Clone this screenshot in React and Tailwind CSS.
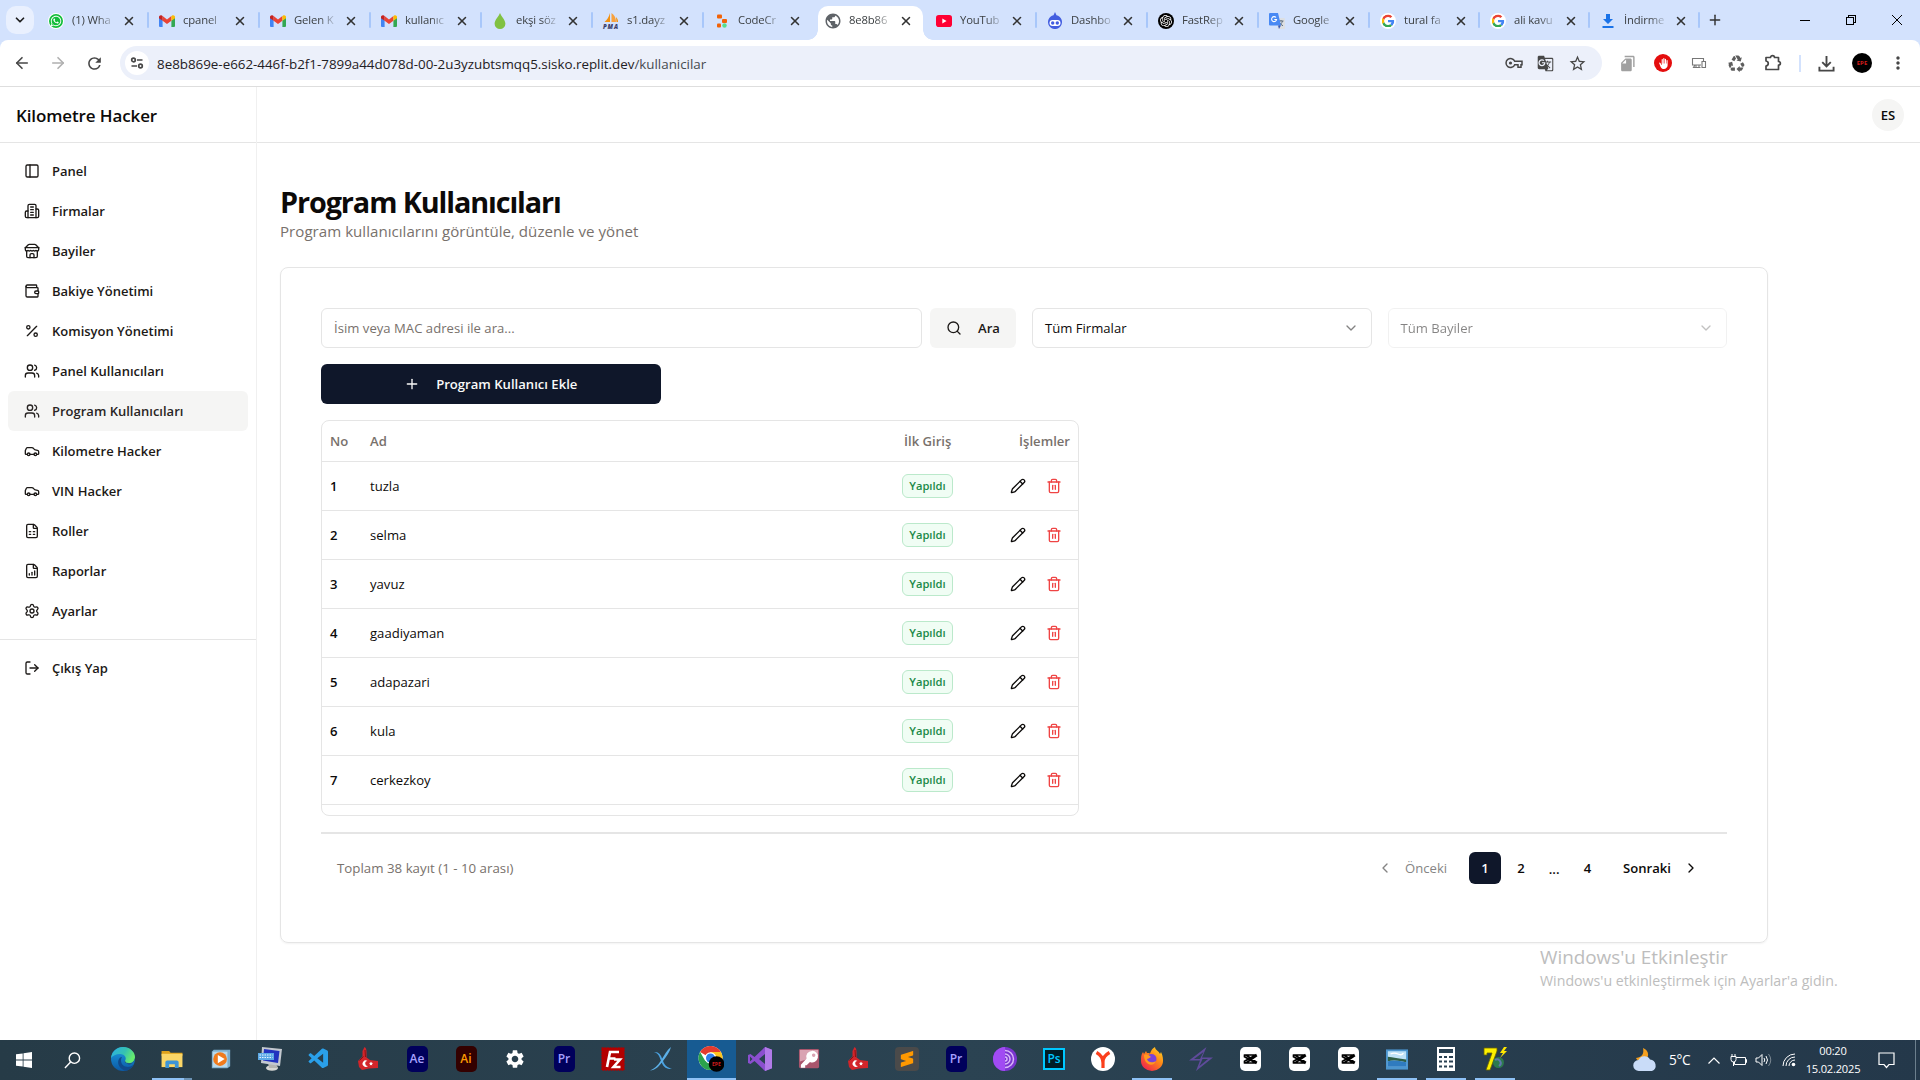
import React from 'react';
import {
  PanelLeft, Wallet, Percent, Users, Car, FileSpreadsheet, FileChartColumnIncreasing, Settings, LogOut,
  Search, Plus, ChevronDown, ChevronLeft, ChevronRight, Pencil, Trash2, X, ArrowLeft, ArrowRight,
} from 'lucide-react';
import { FaWhatsapp } from 'react-icons/fa';
import { SiOpenai, SiSublimetext } from 'react-icons/si';
import {
  MdStarOutline, MdRecycling, MdPublic, MdMoreVert, MdGTranslate, MdRefresh, MdFileCopy, MdBackHand, MdSettings,
} from 'react-icons/md';
import { VscVscode } from 'react-icons/vsc';

/* ---------- favicons ---------- */

const Gmail = () => (
  <svg viewBox="0 0 16 12" className="h-3.5 w-4">
    <path d="M0 2.2V11a1 1 0 0 0 1 1h2.6V5.4L0 2.2Z" fill="#4285f4" />
    <path d="M16 2.2V11a1 1 0 0 1-1 1h-2.6V5.4L16 2.2Z" fill="#34a853" />
    <path d="M3.6 1.1v4.6L8 9l4.4-3.3V1.1L8 4.4 3.6 1.1Z" fill="#ea4335" />
    <path d="M0 2v1.2l3.6 2.6V1.1L3.1.7C1.8-.3 0 .5 0 2Z" fill="#c5221f" />
    <path d="M16 2v1.2l-3.6 2.6V1.1l.5-.4C14.2-.3 16 .5 16 2Z" fill="#fbbc04" />
  </svg>
);

const WhatsApp = () => (
  <span className="grid size-4 place-items-center rounded-full bg-white">
    <span className="grid size-3.5 place-items-center rounded-full bg-[#12bd3a]">
      <FaWhatsapp className="size-3 text-white" />
    </span>
  </span>
);

const Drop = () => (
  <svg viewBox="0 0 16 20" className="h-[18px] w-4">
    <path d="M8 1C9.5 5 14 8.5 14 13a6 6 0 0 1-12 0C2 8.5 6.5 5 8 1Z" fill="#80c142" />
  </svg>
);

const Pma = () => (
  <svg viewBox="0 0 16 16" className="size-4 overflow-visible">
    <path d="M7 0v9H1.5C4 7 6 4 7 0Z" fill="#f29111" />
    <path d="M8.5 0c3 2 4.500 5 4.500 9H8.500Z" fill="#f8a13d" />
    <path d="M13 4c1.500 1.500 2 3 2 5h-1.500Z" fill="#f29111" />
    <text x="0" y="15.500" fontSize="6" fontWeight="800" fontStyle="italic" fill="#3b3f6b" fontFamily="Open Sans, sans-serif" textLength="15">PMA</text>
  </svg>
);

const Replit = () => (
  <svg viewBox="0 0 16 16" className="size-4">
    <rect x="3" y="1.500" width="5" height="4" rx="1" fill="#f26207" />
    <rect x="8" y="6" width="5" height="4" rx="1" fill="#f26207" />
    <rect x="3" y="10.500" width="4" height="4" rx="1" fill="#f26207" />
    <circle cx="10.500" cy="12.500" r="2.200" fill="#57e08b" />
  </svg>
);

const YouTube = () => (
  <svg viewBox="0 0 16 12" className="h-3 w-4">
    <rect width="16" height="12" rx="2.800" fill="#ff0033" />
    <path d="M6.300 3.500v5L10.600 6Z" fill="#fff" />
  </svg>
);

const Coolify = () => (
  <svg viewBox="0 0 16 17" className="h-[17px] w-4">
    <path d="M8 0l1.500 3.200A7 7 0 1 1 6.500 3.200Z" fill="#435ee0" />
    <rect x="2.500" y="8" width="11" height="6" rx="3" fill="#fff" />
    <circle cx="5.700" cy="11" r="1.700" fill="#435ee0" />
    <circle cx="10.300" cy="11" r="1.700" fill="#435ee0" />
  </svg>
);

const ChatGpt = () => (
  <span className="grid size-4 place-items-center rounded-full bg-black">
    <SiOpenai className="size-3 text-white" />
  </span>
);

const GoogleG = () => (
  <svg viewBox="0 0 48 48" className="size-4 rounded-full bg-white p-[1.5px]">
    <path fill="#ea4335" d="M24 9.500c3.500 0 6.700 1.200 9.200 3.600l6.900-6.900C35.900 2.400 30.500 0 24 0 14.600 0 6.500 5.400 2.600 13.200l8 6.200C12.400 13.700 17.700 9.500 24 9.500z" />
    <path fill="#4285f4" d="M47 24.600c0-1.600-.2-3.100-.4-4.600H24v9h12.900c-.6 3-2.200 5.500-4.700 7.200l7.700 6C44.400 38 47 31.800 47 24.600z" />
    <path fill="#fbbc05" d="M10.500 28.600a14.500 14.500 0 0 1 0-9.200l-8-6.200a24 24 0 0 0 0 21.600z" />
    <path fill="#34a853" d="M24 48c6.500 0 11.900-2.100 15.900-5.800l-7.700-6c-2.200 1.500-4.900 2.300-8.200 2.300-6.300 0-11.600-4.200-13.500-9.900l-8 6.200C6.500 42.600 14.600 48 24 48z" />
  </svg>
);

const Translate = () => (
  <svg viewBox="0 0 16 16" className="size-4">
    <path d="M6 5h9a1 1 0 0 1 1 1v9a1 1 0 0 1-1 1H9Z" fill="#dcdfe3" />
    <path d="M9.500 8h5M12 7v1m1.500 0c-.5 2-2 3.500-3.500 4.500M10.500 9.500c.7 1.300 2 2.600 3.500 3.300" stroke="#5f6f7f" fill="none" strokeWidth="1" />
    <path d="M1 0h8l3 12.500H1a1 1 0 0 1-1-1V1a1 1 0 0 1 1-1Z" fill="#4889f4" />
    <path d="M9 12.500h3L10 16Z" fill="#3a5bbc" />
    <path d="M7 4.500A2.500 2.500 0 1 0 7.600 6.500H5.300" stroke="#fff" fill="none" strokeWidth="1.100" />
  </svg>
);

const Download = ({ className }) => (
  <svg viewBox="0 0 16 16" className={className}>
    <path d="M6 1h4v5h3l-5 5-5-5h3ZM2.500 13h11v2h-11Z" fill="#1a73e8" />
  </svg>
);

const tabs = [
  [<WhatsApp />, '(1) Wha'], [<Gmail />, 'cpanel'], [<Gmail />, 'Gelen K'], [<Gmail />, 'kullanıc'],
  [<Drop />, 'ekşi söz'], [<Pma />, 's1.dayz'], [<Replit />, 'CodeCr'],
  [<MdPublic className="size-[18px] text-[#5f6368]" />, '8e8b86'], [<YouTube />, 'YouTub'], [<Coolify />, 'Dashbo'],
  [<ChatGpt />, 'FastRep'], [<Translate />, 'Google'], [<GoogleG />, 'tural fa'], [<GoogleG />, 'ali kavu'],
  [<Download className="size-4" />, 'İndirme'],
];

function TabBar() {
  return (
    <div className="flex h-10 items-center bg-[#d3e2fd]">
      <div className="grid h-7 w-[38px] shrink-0 place-items-center pl-1">
        <div className="mr-1 ml-0.5 grid size-7 place-items-center rounded-[10px] bg-[#e9f0fe]">
          <ChevronDown className="size-3.5 text-[#1f1f1f]" strokeWidth={3} />
        </div>
      </div>
      {tabs.map(([icon, title], i) => {
        const active = i === 7;
        return (
          <div key={i} className={i < 12 ? 'flex h-full w-[111px] shrink-0 items-end' : 'flex h-full w-[110px] shrink-0 items-end'}>
            <div className={active
              ? 'relative ml-[3px] flex h-[34px] w-[105px] items-center rounded-t-[10px] bg-white pb-[5px] pl-1.5 before:absolute before:bottom-0 before:-left-2.5 before:size-2.5 before:bg-[radial-gradient(circle_at_0_0,#d3e2fd_9.5px,#fff_10px)] after:absolute after:-right-2.5 after:bottom-0 after:size-2.5 after:bg-[radial-gradient(circle_at_100%_0,#d3e2fd_9.5px,#fff_10px)]'
              : 'ml-[3px] flex h-[34px] w-[105px] items-center pb-[5px] pl-1.5'}>
              <span className="grid size-[18px] shrink-0 place-items-center">{icon}</span>
              <span className="ml-[7px] w-[42px] text-[11.3px] tracking-[-0.15px] whitespace-nowrap text-[#3c4043] [mask-image:linear-gradient(90deg,#000_60%,transparent_105%)]">{title}</span>
              <X className="ml-2 size-3.5 shrink-0 text-[#333]" strokeWidth={2.6} />
            </div>
            {i !== 7 && i !== 6 && <div className="mb-3 ml-px h-4 w-0.5 rounded bg-[#a8c7fa]" />}
          </div>
        );
      })}
      <Plus className="ml-[7px] size-4 text-[#333]" strokeWidth={2.2} />
      <div className="ml-auto flex h-full items-center text-black">
        <div className="grid w-[46px] place-items-center"><div className="h-px w-2.5 bg-black" /></div>
        <div className="grid w-[46px] place-items-center">
          <svg viewBox="0 0 10 10" className="size-2.5" fill="none" stroke="currentColor" shapeRendering="crispEdges"><path d="M.5 2.500h7v7h-7zM2.500 2.500v-2h7v7h-2" /></svg>
        </div>
        <div className="grid w-[46px] place-items-center">
          <svg viewBox="0 0 10 10" className="size-2.5" fill="none" stroke="currentColor"><path d="M0 0l10 10M10 0L0 10" /></svg>
        </div>
      </div>
    </div>
  );
}

function Toolbar() {
  return (
    <div className="bg-[#d3e2fd]">
      <div className="flex h-[47px] items-center rounded-t-lg border-b border-[#dedede] bg-white text-[#474747]">
        <div className="flex w-[120px] items-center gap-[18px] pl-[13px]">
          <ArrowLeft className="size-[18px]" strokeWidth={2.2} />
          <ArrowRight className="size-[18px] text-[#b0b0b0]" strokeWidth={2.2} />
          <MdRefresh className="size-[19px]" />
        </div>
        <div className="flex h-[34px] w-[1482px] items-center rounded-full bg-[#ecf0fa] pl-[5px]">
          <div className="grid size-6 place-items-center rounded-full bg-white">
            <svg viewBox="0 0 14 12" className="h-3 w-3.5" fill="none" stroke="currentColor" strokeWidth="1.700">
              <circle cx="3.500" cy="3" r="1.800" /><path d="M7 3h5.500M1.500 9H7" /><circle cx="10.500" cy="9" r="1.800" />
            </svg>
          </div>
          <div className="ml-2 pt-0.5 text-[13.4px] tracking-[-0.02px] whitespace-nowrap text-[#1f2024]">8e8b869e-e662-446f-b2f1-7899a44d078d-00-2u3yzubtsmqq5.sisko.replit.dev<span className="text-[#474b50]">/kullanicilar</span></div>
          <div className="mr-[15px] ml-auto flex items-center gap-[14px]">
            <svg viewBox="0 0 18 12" className="h-3 w-[18px]" fill="none" stroke="currentColor" strokeWidth="1.500">
              <path d="M9.700 4.300H17v3.400h-1v2.500h-3V7.700H9.700a4.500 4.500 0 1 1 0-3.400Z" /><circle cx="5.500" cy="6" r="1.600" fill="currentColor" stroke="none" />
            </svg>
            <MdGTranslate className="size-[17px]" />
            <MdStarOutline className="size-[19px]" />
          </div>
        </div>
        <div className="ml-[17px] flex items-center gap-[18px]">
          <MdFileCopy className="size-[17px] -scale-x-100 text-[#a0a0a0]" />
          <span className="grid size-[18px] place-items-center rounded-full bg-[#e40d0d]"><MdBackHand className="size-[11px] text-white" /></span>
          <svg viewBox="0 0 16 12" className="mx-px h-3 w-4" fill="none" stroke="#777" strokeWidth="1.100">
            <path d="M10 8H1.500V1.500h11V4M4 8l-1.500 2.500h7M11 4.500h3.500v6H11zM5 8v2M8 8v2" />
          </svg>
          <MdRecycling className="ml-px size-[19px] text-[#5d5d5d]" />
          <svg viewBox="0 0 18 18" className="size-[18px]" fill="none" stroke="currentColor" strokeWidth="1.700" strokeLinejoin="round">
            <path d="M2 3.500h4.500C6.500 1 10.500 1 10.500 3.500H14.500v4C17 7.500 17 11 14.500 11v4.500H2V12c3-.5 3-4.500 0-5Z" />
          </svg>
          <div className="-ml-px h-[17px] w-0.5 bg-[#d3e2fd]" />
          <svg viewBox="0 0 18 18" className="-ml-px size-[17px]" fill="none" stroke="currentColor" strokeWidth="2"><path d="M9 1v11M4.500 7.500L9 12l4.500-4.500M1.500 12.500v4h15v-4" /></svg>
          <div className="-ml-px grid size-5 place-items-center rounded-full bg-black text-[6px] leading-none font-bold text-[#d01c1c]">EPE</div>
          <MdMoreVert className="-ml-0.5 size-5" />
        </div>
      </div>
    </div>
  );
}

/* ---------- application ---------- */

const StrokeIcon = ({ paths, className }) => (
  <svg viewBox="0 0 24 24" className={className} fill="none" stroke="currentColor" strokeWidth="2" strokeLinecap="round" strokeLinejoin="round">
    {paths.map((d) => <path key={d} d={d} />)}
  </svg>
);

const Building = (p) => (
  <StrokeIcon {...p} paths={[
    'M6 22V4a2 2 0 0 1 2-2h8a2 2 0 0 1 2 2v18Z', 'M6 12H4a2 2 0 0 0-2 2v6a2 2 0 0 0 2 2h2',
    'M18 9h2a2 2 0 0 1 2 2v9a2 2 0 0 1-2 2h-2', 'M10 6h4', 'M10 10h4', 'M10 14h4', 'M10 18h4',
  ]} />
);

const Shop = (p) => (
  <StrokeIcon {...p} paths={[
    'm2 7 4.410-4.410A2 2 0 0 1 7.830 2h8.340a2 2 0 0 1 1.420.590L22 7', 'M4 12v8a2 2 0 0 0 2 2h12a2 2 0 0 0 2-2v-8',
    'M15 22v-4a2 2 0 0 0-2-2h-2a2 2 0 0 0-2 2v4', 'M2 7h20',
    'M22 7v3a2 2 0 0 1-2 2a2.700 2.700 0 0 1-1.590-.63.7.7 0 0 0-.82 0A2.700 2.700 0 0 1 16 12a2.700 2.700 0 0 1-1.590-.63.7.7 0 0 0-.82 0A2.700 2.700 0 0 1 12 12a2.700 2.700 0 0 1-1.590-.63.7.7 0 0 0-.82 0A2.700 2.700 0 0 1 8 12a2.700 2.700 0 0 1-1.590-.63.7.7 0 0 0-.82 0A2.700 2.700 0 0 1 4 12a2 2 0 0 1-2-2V7',
  ]} />
);

const menu = [
  [PanelLeft, 'Panel'], [Building, 'Firmalar'], [Shop, 'Bayiler'], [Wallet, 'Bakiye Yönetimi'], [Percent, 'Komisyon Yönetimi'],
  [Users, 'Panel Kullanıcıları'], [Users, 'Program Kullanıcıları', true], [Car, 'Kilometre Hacker'], [Car, 'VIN Hacker'],
  [FileSpreadsheet, 'Roller'], [FileChartColumnIncreasing, 'Raporlar'], [Settings, 'Ayarlar'],
];

function MenuItem({ icon: Icon, label, active }) {
  return (
    <div className={active
      ? 'flex h-10 items-center gap-3 rounded-md bg-[#f5f5f4] px-4 text-[13px] font-semibold text-[#292524]'
      : 'flex h-10 items-center gap-3 rounded-md px-4 text-[13px] font-semibold text-[#1c1917]'}>
      <Icon className="size-4" />
      <span className="pt-0.5">{label}</span>
    </div>
  );
}

function Sidebar() {
  return (
    <aside className="flex w-[257px] shrink-0 flex-col border-r border-[#f0f0f0]">
      <div className="flex h-14 items-center border-b border-[#e5e5e5] px-4 pt-0.5 text-[17px] font-semibold tracking-[-0.12px] text-[#0c0a09]">Kilometre Hacker</div>
      <nav className="border-b border-[#e5e5e5] p-2">
        {menu.map(([icon, label, active]) => <MenuItem key={label} icon={icon} label={label} active={active} />)}
      </nav>
      <div className="p-2"><MenuItem icon={LogOut} label="Çıkış Yap" /></div>
    </aside>
  );
}

function Filters() {
  return (
    <div className="grid grid-cols-4 gap-4 text-[13.1px]">
      <div className="col-span-2 flex gap-2">
        <div className="flex h-10 flex-1 items-center rounded-md border border-[#e5e5e5] px-3 pt-0.5 tracking-[0.02px] text-[#78716c]">İsim veya MAC adresi ile ara...</div>
        <div className="flex h-10 w-[86px] items-center gap-4 rounded-md bg-[#f5f5f4] px-4 font-semibold text-[#1c1917]">
          <Search className="size-4" /><span className="pt-0.5">Ara</span>
        </div>
      </div>
      <div className="flex h-10 items-center justify-between rounded-md border border-[#e5e5e5] px-3 text-[#0c0a09]">
        <span className="pt-0.5">Tüm Firmalar</span><ChevronDown className="size-4 opacity-50" />
      </div>
      <div className="flex h-10 items-center justify-between rounded-md border border-[#e5e5e5] px-3 text-[#0c0a09] opacity-50">
        <span className="pt-0.5">Tüm Bayiler</span><ChevronDown className="size-4 opacity-50" />
      </div>
      <div className="flex h-10 items-center justify-center gap-4 rounded-md bg-[#0f172a] font-semibold text-[#fafaf9]">
        <Plus className="size-4" /><span className="pt-0.5">Program Kullanıcı Ekle</span>
      </div>
    </div>
  );
}

const users = ['tuzla', 'selma', 'yavuz', 'gaadiyaman', 'adapazari', 'kula', 'cerkezkoy'];

function UserTable() {
  return (
    <div className="mt-4 h-[396px] w-[758px] rounded-lg border border-[#e5e5e5] text-[13.1px]">
      <div className="flex h-[41px] items-center border-b border-[#e5e5e5] px-2 pt-0.5 font-semibold text-[#78716c]">
        <span className="w-10">No</span>
        <span className="w-[534px]">Ad</span>
        <span>İlk Giriş</span>
        <span className="ml-auto">İşlemler</span>
      </div>
      {users.map((name, i) => (
        <div key={name} className="flex h-[49px] items-center border-b border-[#e5e5e5] px-2 text-[#0c0a09]">
          <span className="w-10 pt-0.5 font-semibold">{i + 1}</span>
          <span className="w-[532px] pt-0.5">{name}</span>
          <span className="grid h-6 w-[51px] place-items-center rounded-md border border-[#bbe9cb] bg-[#f0fdf4] pt-px text-[11.2px] font-semibold text-[#218a48]">Yapıldı</span>
          <Pencil className="ml-auto size-4" />
          <Trash2 className="mr-2 ml-5 size-4 text-[#ef4444]" />
        </div>
      ))}
    </div>
  );
}

function Pagination() {
  return (
    <div className="mt-4 flex items-center justify-between border-t-2 border-[#e5e5e5] px-4 pt-[18px] text-[13.1px]">
      <span className="pt-0.5 text-[13.3px] text-[#78716c]">Toplam 38 kayıt (1 - 10 arası)</span>
      <div className="mr-3 flex items-center font-semibold text-[#0c0a09]">
        <div className="flex w-[92px] items-center gap-3 font-medium text-[#858484]"><ChevronLeft className="size-4" /><span className="pt-0.5">Önceki</span></div>
        <span className="grid size-8 place-items-center rounded-md bg-[#0f172a] pt-0.5 text-[#fafaf9]">1</span>
        <span className="ml-1 w-8 pt-0.5 text-center">2</span>
        <span className="w-[34px] pt-1 text-center">...</span>
        <span className="w-[33px] pt-0.5 text-center">4</span>
        <span className="mr-3 ml-[19px] pt-0.5">Sonraki</span>
        <ChevronRight className="size-4" />
      </div>
    </div>
  );
}

function Content() {
  return (
    <div className="flex min-w-0 flex-1 flex-col">
      <header className="flex h-14 items-center justify-end border-b border-[#e5e5e5] pr-4">
        <span className="grid size-8 place-items-center rounded-full bg-[#f5f5f4] pt-0.5 text-[13.1px] font-semibold text-[#0c0a09]">ES</span>
      </header>
      <main className="pt-[39px] pl-[23px]">
        <h1 className="text-[28.8px] leading-10 font-bold tracking-[-1.1px] text-[#0c0a09]">Program Kullanıcıları</h1>
        <p className="-mt-px text-[15.1px] leading-5 tracking-[0.02px] text-[#78716c]">Program kullanıcılarını görüntüle, düzenle ve yönet</p>
        <section className="mt-[26px] h-[676px] w-[1488px] rounded-lg border border-[#e5e5e5] p-10 shadow-xs">
          <Filters />
          <UserTable />
          <Pagination />
        </section>
      </main>
      <div className="ml-[1283px] pt-[3px] text-[#bdbdbd]">
        <div className="text-[18.9px] leading-[23px] tracking-[-0.02px]">Windows'u Etkinleştir</div>
        <div className="pt-px text-[14.2px] leading-[21px]">Windows'u etkinleştirmek için Ayarlar'a gidin.</div>
      </div>
    </div>
  );
}

/* ---------- taskbar ---------- */

const Adobe = ({ label, className }) => (
  <span className={`grid h-[26px] w-[21px] place-items-center rounded-[5px] text-[12px] leading-none font-semibold ${className}`}>{label}</span>
);

const WindowsLogo = () => (
  <svg viewBox="0 0 16 16" className="size-4" fill="#fff"><path d="M0 2.300L6.700 1.400v6.200H0zM7.500 1.300L16 0v7.600H7.500zM0 8.400h6.700v6.200L0 13.700zM7.500 8.400H16V16l-8.500-1.200z" /></svg>
);

const Edge = () => (
  <svg viewBox="0 0 24 24" className="size-6">
    <defs>
      <linearGradient id="edgeA" x1="0" y1="0" x2="1" y2=".4"><stop offset="0" stopColor="#2bb0e8" /><stop offset=".6" stopColor="#35c1b1" /><stop offset="1" stopColor="#66eb6e" /></linearGradient>
      <linearGradient id="edgeB" x1="0" y1="0" x2="0" y2="1"><stop offset="0" stopColor="#1b9de2" /><stop offset="1" stopColor="#0c59a4" /></linearGradient>
    </defs>
    <circle cx="12" cy="12" r="12" fill="url(#edgeB)" />
    <path d="M0 11C1 4 6 0 12 0c7 0 12 5 12 10 0 4-3 6-6 6-3 0-4.500-1-4-2 2-3 0-7-5-7-4 0-7.500 2-9 4Z" fill="url(#edgeA)" />
    <path d="M11 10c-2 3-1 8 3 9.500 3 1 6 .5 8.500-1.500-1 2.500-4 5-7 5.700C9 23 6 17 7.500 13 8.300 11 9.500 10.200 11 10Z" fill="#114a8b" />
    <path d="M24 11c0 4-3 5.500-6 5.500-3.500 0-4.500-1-4-2.500 3 6 8 4 10-3Z" fill="#294b62" />
  </svg>
);

const Explorer = () => (
  <svg viewBox="0 0 24 20" className="h-[19px] w-6">
    <path d="M1 1h8l1.500 2H23v3H1z" fill="#e0a21b" />
    <path d="M1 4h22v14H1z" fill="#fbd667" />
    <path d="M5 19v-6a2 2 0 0 1 2-2h10a2 2 0 0 1 2 2v6h-4v-4H9v4z" fill="#3d95d8" />
  </svg>
);

const MediaPlayer = () => (
  <svg viewBox="0 0 24 24" className="size-[22px]">
    <path d="M4 2h18v18l-3 2H2V4z" fill="#7eafcd" /><path d="M3 4h16v17H3z" fill="#b9d9eb" />
    <circle cx="11" cy="12" r="7.500" fill="#f07b1c" /><path d="M8.500 7.500v9L16 12z" fill="#fff" />
  </svg>
);

const Remote = () => (
  <svg viewBox="0 0 24 24" className="size-6">
    <ellipse cx="14" cy="21" rx="6" ry="2.800" fill="#d8d8d4" /><path d="M10 15l8 2 2 4h-9z" fill="#b5b5b0" />
    <path d="M4 0L24 2l-2 17-19-3z" fill="#c3c8cf" /><path d="M6 2l15.500 2L20 16 5 13.500z" fill="#2233bf" />
    <path d="M0 6h16v7H0z" fill="#5ca9e6" /><path d="M1.500 8h13M1.500 10.500h13" stroke="#e7f4ff" strokeDasharray="1.500 1" />
  </svg>
);

const FlagHand = () => (
  <svg viewBox="0 0 22 24" className="h-6 w-[22px]">
    <path d="M7.500 0c1.500.5 2 2.500 2 5v5.500l3.500 2.500 8 1v7l-9 .5-7 1.500-3-3-1-6 4.500-4.500V4z" fill="#d3252a" />
    <path d="M8 3l.5 7M2.500 13.500l4-4" stroke="#8c1014" strokeWidth="1" fill="none" />
    <path d="M10.500 14a3.200 3.200 0 1 0 .5 5 2.500 2.500 0 1 1-.5-5Z" fill="#fff" />
    <path d="m14 14.500.6 1.300 1.400.2-1 1 .2 1.400-1.200-.7-1.200.7.2-1.400-1-1 1.400-.2z" fill="#fff" />
  </svg>
);

const FileZilla = () => (
  <svg viewBox="0 0 24 24" className="size-6">
    <rect x=".8" y=".8" width="22.400" height="22.400" fill="#b30000" stroke="#b30000" strokeDasharray="1.500 1.200" />
    <path d="M6 20L9 5h9M7.500 11.500h7M13 12.500h6l-6.500 7.500h7" stroke="#fff" strokeWidth="2.600" fill="none" />
  </svg>
);

const Xshape = () => (
  <svg viewBox="0 0 24 24" className="size-6">
    <path d="M4 5c4.500-.5 7 2.500 8.500 7.500S17 21 22 21.500c-5 1.500-9-1.500-11-7.500C9.500 9 8 6 4 5Z" fill="#4ba3e2" />
    <path d="M21 0c-4 3-6.500 8-10 13.500S4 22 0 23.500c5 0 9.500-4.500 13-9.500 3.500-5 7-9 8-14Z" fill="#5cb0e8" />
  </svg>
);

const Chrome = () => (
  <svg viewBox="0 0 26 26" className="size-[26px]">
    <circle cx="12.500" cy="12" r="12" fill="#fff" />
    <path d="M12.500 12L2.100 6a12 12 0 0 1 20.800 0z" fill="#e33b2e" />
    <path d="M12.500 12V6h10.400a12 12 0 0 1-10.400 18z" fill="#fcc31e" />
    <path d="M12.500 12L7.300 15 2.100 6a12 12 0 0 0 10.400 18l5.200-9z" fill="#2ba24c" />
    <circle cx="12.500" cy="12" r="5.800" fill="#fff" /><circle cx="12.500" cy="12" r="4.500" fill="#2f7de9" />
    <circle cx="18.500" cy="18" r="7.800" fill="#000" />
    <text x="14" y="20" fontSize="5" fontWeight="700" fill="#d01c1c" fontFamily="Open Sans, sans-serif">EPE</text>
  </svg>
);

const VisualStudio = () => (
  <svg viewBox="0 0 24 24" className="size-6">
    <path d="M17 0l7 2.800v18.400L17 24 6.500 14 2.500 17 0 16V8l2.500-1 4 3z" fill="#8b4fcf" />
    <path d="M17 7v10l-6-5zM2 9.500v5L4.500 12z" fill="#2a4152" /><path d="M17 0l7 2.800v18.400L17 24z" fill="#b17be8" />
  </svg>
);

const Access = () => (
  <svg viewBox="0 0 24 24" className="size-[23px]">
    <rect x="1" y="1" width="21" height="20" rx="1.500" fill="#a9556c" /><path d="M2 2h19v6L2 14z" fill="#d9a3b2" />
    <path fillRule="evenodd" d="M14.500 3a6 6 0 1 1-2 11.500L9 18H7.500v2.500H3v-3l6-6.500A6 6 0 0 1 14.500 3Zm1.800 2.700a1.800 1.800 0 1 0 .1 0Z" fill="#fff" />
  </svg>
);

const Tor = () => (
  <svg viewBox="0 0 24 24" className="size-6">
    <circle cx="12" cy="12" r="12" fill="#7a35cf" /><path d="M12 0a12 12 0 0 0 0 24z" fill="#a14bf3" />
    <path d="M12 3.500a8.500 8.500 0 0 1 0 17M12 7a5 5 0 0 1 0 10M12 10a2 2 0 0 1 0 4" fill="none" stroke="#d9b6fa" strokeWidth="1.500" />
  </svg>
);

const Yandex = () => (
  <svg viewBox="0 0 24 24" className="size-6">
    <circle cx="12" cy="12" r="12" fill="#fff" />
    <path d="M5.500 5.500Q12 9 12 16M18.500 5.500Q12 9 12 15v6" fill="none" stroke="#fb3f1c" strokeWidth="3.200" />
  </svg>
);

const Firefox = () => (
  <svg viewBox="0 0 24 24" className="size-6">
    <defs><linearGradient id="fox" x1="1" y1="0" x2=".2" y2="1"><stop offset="0" stopColor="#ffe226" /><stop offset=".45" stopColor="#ff8a16" /><stop offset="1" stopColor="#f0204f" /></linearGradient></defs>
    <path d="M3 5l1 2 2-3 1 2c1 0 2 0 3 .5C11 3 13 1 15 0c0 3 4 4 5 7l1-2c2 4 2 7 2 9a11 10 0 0 1-22 0c0-4 0-6 2-9Z" fill="url(#fox)" />
    <circle cx="11.500" cy="12" r="5" fill="#7a41d8" /><path d="M4 8c3-1 5 0 7 2-2 1-3 2-4 2 1 4 6 4 9 2-2 6-12 5-12-6Z" fill="#ff9a1f" />
  </svg>
);

const CapCut = () => (
  <svg viewBox="0 0 21 26" className="h-[26px] w-[21px]">
    <rect y="1" width="21" height="24" rx="5" fill="#fff" />
    <path d="M17 9.500L6 17h8.500v-1.500M17 16.500L6 9h8.500v1.500M4.500 9v1.700l12 6.800M4.500 17v-1.700l12-6.800" fill="none" stroke="#000" strokeWidth="1.700" />
  </svg>
);

const Photo = () => (
  <svg viewBox="0 0 24 22" className="h-[21px] w-[22px]">
    <rect width="24" height="22" fill="#4c96cf" /><rect x="2" y="2" width="20" height="17" fill="#bfe2f7" />
    <path d="M2 8q8 1 20 3v3q-12-3-20-1z" fill="#2f5f46" /><path d="M2 13q8-2 20 1v5H2z" fill="#2f7bbf" />
    <path d="M5 5q4-2 8 0t6-1" stroke="#fff" fill="none" strokeWidth="1.500" />
  </svg>
);

const Calc = () => (
  <svg viewBox="0 0 18 24" className="h-6 w-[18px]">
    <rect width="18" height="24" fill="#fff" /><rect x="2" y="2" width="14" height="4" fill="#2a4152" />
    <path d="M2 10h3m2 0h3m2 0h4M2 14.500h3m2 0h3m2 0h4M2 19.500h3m2 0h3m2 0h4" stroke="#2a4152" strokeWidth="2" />
  </svg>
);

const Seven = () => (
  <svg viewBox="0 0 24 24" className="size-6">
    <path d="M1 1h13v3L7 23H3L9 6H4v2H1z" fill="#fdf000" stroke="#6b6400" strokeWidth=".8" />
    <circle cx="15.500" cy="15.500" r="5.500" fill="#2d7a4d" /><path d="M12 13q3-2 5 1t-1 5" fill="none" stroke="#5f78b0" strokeWidth="2" />
    <path d="M21 0l-4 6h3l-3 5 7-7h-3l3-4z" fill="#ffe800" />
  </svg>
);

const apps = [
  [<Edge />], [<Explorer />, 3], [<MediaPlayer />], [<Remote />], [<VscVscode className="size-6 text-[#2aa0ea]" />], [<FlagHand />],
  [<Adobe label="Ae" className="bg-[#00005b] text-[#a6a0ff]" />], [<Adobe label="Ai" className="bg-[#330000] text-[#ff9a00]" />],
  [<MdSettings className="size-[22px] text-white" />], [<Adobe label="Pr" className="bg-[#00005b] text-[#a6a0ff]" />], [<FileZilla />], [<Xshape />],
  [<Chrome />, 2], [<VisualStudio />], [<Access />], [<FlagHand />],
  [<span className="grid size-6 place-items-center rounded-sm bg-[#4a4a4a]"><SiSublimetext className="size-4 text-[#ff9800]" /></span>],
  [<Adobe label="Pr" className="bg-[#00005b] text-[#a6a0ff]" />], [<Tor />],
  [<span className="grid h-[22px] w-[22px] place-items-center border-2 border-[#00c8ff] bg-[#001d26] text-[12px] leading-none font-semibold text-[#00c8ff]">Ps</span>],
  [<Yandex />], [<Firefox />, 1], [<svg viewBox="0 0 24 24" className="size-6" fill="#5f4b9b"><path d="M17.500 0L0 13.500h11L7 24 24 10.500H13ZM14.500 5L11 12h8l-8.500 7L13.500 12H5Z" fillRule="evenodd" /></svg>],
  [<CapCut />], [<CapCut />], [<CapCut />], [<Photo />, 1], [<Calc />, 1], [<Seven />, 1],
];

function Taskbar() {
  return (
    <footer className="flex h-10 shrink-0 bg-linear-to-r from-[#263b47] via-[#2b4352] to-[#24384a] text-white">
      <div className="grid w-12 place-items-center"><WindowsLogo /></div>
      <div className="mr-[2.5px] grid w-12 place-items-center">
        <svg viewBox="0 0 18 18" className="size-[17px]" fill="none" stroke="#fff" strokeWidth="1.500"><circle cx="11" cy="6.500" r="5.500" /><path d="M7 10.500L1 17" /></svg>
      </div>
      {apps.map(([icon, state], i) => (
        <div key={i} className={state === 2 ? 'flex w-[49px] flex-col items-center bg-[#175b92]' : 'flex w-[49px] flex-col items-center'}>
          <div className="grid h-[38px] place-items-center">{icon}</div>
          {state === 1 && <div className="h-0.5 w-10 bg-[#8ec1f5]" />}
          {state === 2 && <div className="h-0.5 w-full bg-[#8ec1f5]" />}
          {state === 3 && <div className="flex h-0.5 w-10"><div className="w-8 bg-[#8ec1f5]" /><div className="w-2 bg-[#6c93b5]" /></div>}
        </div>
      ))}
      <div className="ml-auto flex items-center">
        <svg viewBox="0 0 24 24" className="size-6">
          <path d="M10 0c1 5 0 9-7 10 1 3 5 4 9 2s5-9-2-12Z" fill="#f5a01f" /><path d="M6 23a5.500 5.500 0 0 1-.5-11 6.500 6.500 0 0 1 11.500-.5A6 6 0 0 1 19 23z" fill="#c9dcf8" />
        </svg>
        <span className="ml-3 w-[23px] text-[13.7px] tracking-[-0.3px] whitespace-nowrap">5°C</span>
        <svg viewBox="0 0 12 7" className="ml-4 h-[7px] w-3" fill="none" stroke="#fff" strokeWidth="1.200"><path d="M.5 6.500L6 1l5.500 5.500" /></svg>
        <svg viewBox="0 0 17 14" className="ml-2.5 h-3.5 w-[17px]" fill="none" stroke="#fff"><path d="M6 4.500h9.500v7H4.500V9M15.500 6.500h1v3h-1M1 3.500h5v3a2.500 2.500 0 0 1-5 0zM2 3.500V1M5 3.500V1M3.500 9v4" /></svg>
        <svg viewBox="0 0 17 14" className="ml-2 h-3.5 w-[17px]" fill="none" stroke="#fff"><path d="M1 5h2.500L7 1.500v11L3.500 9H1zM9 5q1.500 2 0 4M11 3q3 4 0 8" /><path d="M13.500 1q4.500 6 0 12" opacity=".4" /></svg>
        <svg viewBox="0 0 14 14" className="ml-2.5 size-3.5" fill="none" stroke="#fff"><path d="M1 13A12 12 0 0 1 13 1M4 13a9 9 0 0 1 9-9M7 13a6 6 0 0 1 6-6" /><circle cx="11.500" cy="11.500" r="1.800" fill="#fff" stroke="none" /></svg>
        <div className="ml-2.5 flex w-[54px] flex-col items-center text-[11.1px] leading-[18px] tracking-[-0.2px] whitespace-nowrap"><span>00:20</span><span>15.02.2025</span></div>
        <svg viewBox="0 0 17 17" className="mr-5 ml-[18px] size-[17px]" fill="none" stroke="#fff" strokeWidth="1.200"><path d="M1 1h15v11.500h-5L8.500 15.500 6 12.500H1z" /></svg>
        <div className="mr-1 h-10 w-px bg-[#6c7f8d]" />
      </div>
    </footer>
  );
}

export default function App() {
  return (
    <div className="flex h-[1080px] w-[1920px] flex-col overflow-hidden bg-white font-['Open_Sans','Noto_Sans',sans-serif]">
      <TabBar />
      <Toolbar />
      <div className="flex min-h-0 flex-1">
        <Sidebar />
        <Content />
      </div>
      <Taskbar />
    </div>
  );
}
